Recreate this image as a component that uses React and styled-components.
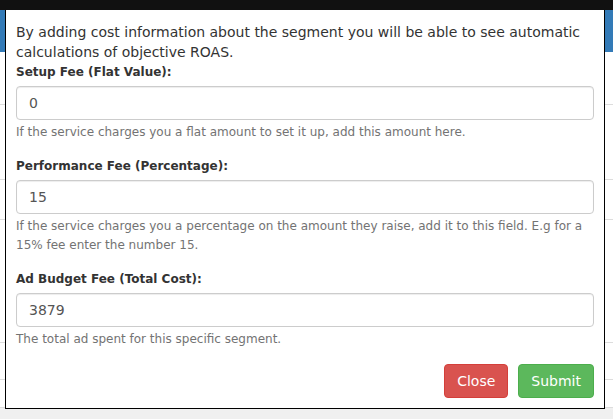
import { createGlobalStyle } from "styled-components";
import styled from "styled-components";

const GlobalStyle = createGlobalStyle`
  html, body {
    margin: 0;
    padding: 0;
    background: #f0f0f0;
    font-family: "DejaVu Sans", Verdana, sans-serif;
  }
  * { box-sizing: border-box; }
`;

const fields = [
  {
    label: "Setup Fee (Flat Value):",
    value: "0",
    help: "If the service charges you a flat amount to set it up, add this amount here.",
  },
  {
    label: "Performance Fee (Percentage):",
    value: "15",
    help:
      "If the service charges you a percentage on the amount they raise, add it to this field. E.g for a 15% fee enter the number 15.",
  },
  {
    label: "Ad Budget Fee (Total Cost):",
    value: "3879",
    help: "The total ad spent for this specific segment.",
  },
];

// row heights of the table behind the dialog
const rows = [53, 75, 40, 123, 37, 28];

function App() {
  return (
    <Page>
      <GlobalStyle />
      <TopBar />
      <Backdrop>
        <TableHead />
        {rows.map((h, i) => (
          <TableRow key={i} $h={h} />
        ))}
      </Backdrop>
      <Modal>
        <Intro>
          By adding cost information about the segment you will be able to see
          automatic calculations of objective ROAS.
        </Intro>
        {fields.map((f) => (
          <FormGroup key={f.label}>
            <Label>{f.label}</Label>
            <Input defaultValue={f.value} />
            <Help>{f.help}</Help>
          </FormGroup>
        ))}
        <Footer>
          <Button $color="#d9534f" $border="#d43f3a">
            Close
          </Button>
          <Button $color="#5cb85c" $border="#4cae4c">
            Submit
          </Button>
        </Footer>
      </Modal>
    </Page>
  );
}

const Page = styled.div`
  position: relative;
  width: 613px;
  height: 419px;
  overflow: hidden;
  background: #f0f0f0;
`;

const TopBar = styled.div`
  height: 10px;
  background: #111;
`;

const Backdrop = styled.div`
  display: flex;
  flex-direction: column;
  background: #fff;
`;

const TableHead = styled.div`
  height: 42px;
  background: #337ab7;
`;

const TableRow = styled.div`
  height: ${({ $h }) => $h}px;
  border-bottom: 1px solid #ddd;
`;

const Modal = styled.div`
  position: absolute;
  left: 5px;
  top: 10px;
  width: 600px;
  height: 399px;
  background: #fff;
  border: 1px solid #000;
  border-top: none;
  padding: 12px 10px 0 10px;
  display: flex;
  flex-direction: column;
`;

const Intro = styled.p`
  margin: 0;
  font-size: 14px;
  line-height: 20px;
  color: #333;
`;

const FormGroup = styled.div`
  display: flex;
  flex-direction: column;
  margin-bottom: 14px;
`;

const Label = styled.label`
  font-size: 12px;
  font-weight: bold;
  line-height: 20px;
  color: #333;
  margin-bottom: 4px;
`;

const Input = styled.input`
  height: 34px;
  width: 100%;
  padding: 6px 12px;
  font-family: inherit;
  font-size: 14px;
  color: #555;
  border: 1px solid #ccc;
  border-radius: 4px;
  box-shadow: inset 0 1px 1px rgba(0, 0, 0, 0.075);
  outline: none;
`;

const Help = styled.div`
  margin-top: 3px;
  font-size: 12px;
  line-height: 19px;
  color: #737373;
`;

const Footer = styled.div`
  display: flex;
  justify-content: flex-end;
  gap: 10px;
  margin-top: 1px;
`;

const Button = styled.button`
  height: 34px;
  padding: 6px 12px;
  font-family: "DejaVu Sans", Verdana, sans-serif;
  font-size: 14px;
  color: #fff;
  background: ${({ $color }) => $color};
  border: 1px solid ${({ $border }) => $border};
  border-radius: 4px;
`;

export default App;
